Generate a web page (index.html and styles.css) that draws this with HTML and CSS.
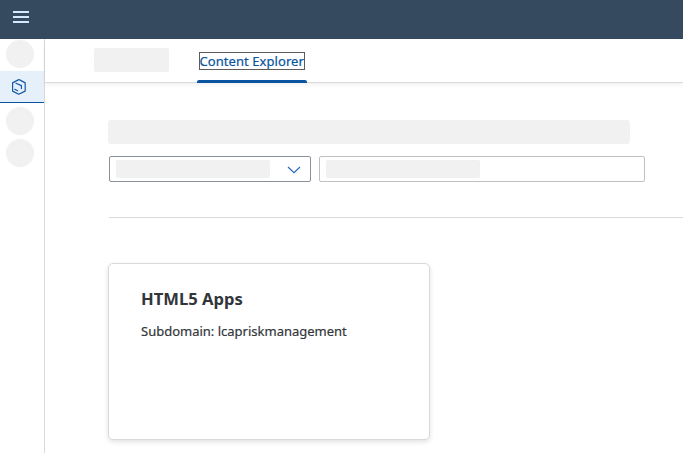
FILE: index.html
```html
<!DOCTYPE html>
<html lang="en">
<head>
<meta charset="utf-8">
<title>Content Explorer</title>
<link rel="stylesheet" href="styles.css">
</head>
<body>
<header class="shell">
  <svg width="16" height="12" viewBox="0 0 16 12"><path d="M0 1h16M0 6h16M0 11h16" fill="none" stroke="#d1e8ff" stroke-width="2"/></svg>
</header>
<div class="body">
  <nav class="side">
    <span class="dot"></span>
    <a class="side-item">
      <svg width="16" height="18" viewBox="0 0 16 18" fill="none" stroke="#1558a8" stroke-width="1.2" stroke-linejoin="round" stroke-linecap="round"><path d="M7.7 1.6 1.6 4.9v8.2l6.1 3.2 6.5-3.2V4.9L8.7 1.9M5 5.2l5.4 2.4v3M3.8 11.3l2.8 1.5"/></svg>
    </a>
    <span class="dot"></span>
    <span class="dot"></span>
  </nav>
  <main class="main">
    <div class="tabs">
      <span class="blank blank-tab"></span>
      <a class="tab"><span class="tab-label">Content Explorer</span></a>
    </div>
    <section class="content">
      <div class="blank blank-title"></div>
      <div class="filters">
        <div class="select">
          <span class="blank blank-field"></span>
          <svg class="chevron" width="14" height="8" viewBox="0 0 14 8"><path d="M1 1l6 5.7L13 1" fill="none" stroke="#2a69b3" stroke-width="1.2"/></svg>
        </div>
        <div class="input"><span class="blank blank-field"></span></div>
      </div>
      <hr class="rule">
      <article class="card">
        <h2>HTML5 Apps</h2>
        <p>Subdomain: lcapriskmanagement</p>
      </article>
    </section>
  </main>
</div>
</body>
</html>
```
FILE: styles.css
```css
* { box-sizing: border-box; }
body {
  margin: 0;
  height: 453px;
  overflow: hidden;
  display: flex;
  flex-direction: column;
  background: #fff;
  color: #32363a;
  font-family: "Noto Sans", sans-serif;
}
svg { display: block; }
.shell {
  flex: 0 0 39px;
  background: #354a5f;
  padding: 11px 13px;
}
.body { flex: 1; display: flex; min-height: 0; }
.side {
  flex: 0 0 45px;
  border-right: 1px solid #d9d9d9;
  padding-top: 1px;
}
.dot {
  display: block;
  width: 28px;
  height: 28px;
  margin: 0 0 4px 6px;
  border-radius: 50%;
  background: #f1f1f1;
}
.side-item {
  display: block;
  height: 32px;
  margin: 3px 0 4px;
  padding: 7px 0 0 11px;
  background: #e5f0fa;
  border-bottom: 1px solid #0854a0;
}
.dot:first-child { margin-bottom: 3px; }
.main { flex: 1; min-width: 0; }
.blank { display: block; background: #f1f1f1; border-radius: 2px; }
.tabs {
  display: flex;
  height: 44px;
  padding-left: 49px;
  border-bottom: 1px solid #d9d9d9;
  box-shadow: 0 2px 4px rgba(0, 0, 0, .06);
}
.blank-tab { width: 75px; height: 24px; margin-top: 9px; }
.tab {
  width: 110px;
  height: 44px;
  margin-left: 28px;
  padding: 13px 2px 0;
}
.tab::after {
  content: "";
  display: block;
  height: 3px;
  margin: 10px -2px 0;
  border-radius: 2px 2px 0 0;
  background: #0854a0;
}
.tab-label {
  display: block;
  width: 106px;
  height: 18px;
  border: 1px solid #5c5c5c;
  color: #0854a0;
  font-size: 13px;
  line-height: 16px;
  letter-spacing: .07px;
  text-indent: -.6px;
  -webkit-text-stroke: .2px;
  white-space: nowrap;
}
.content { padding: 37px 0 0 63px; }
.blank-title { width: 522px; height: 24px; border-radius: 3px; }
.filters { display: flex; gap: 8px; margin: 12px 0 0 1px; }
.select, .input {
  display: flex;
  align-items: center;
  height: 26px;
  padding-left: 6px;
  border: 1px solid #89919a;
  border-radius: 2px;
}
.select { width: 202px; gap: 17px; }
.chevron { margin-top: 2px; }
.input { width: 326px; border-color: #bfbfc4; }
.blank-field { width: 154px; height: 18px; }
.rule { height: 1px; margin: 35px 0 0 1px; border: 0; background: #d9d9d9; }
.card {
  width: 322px;
  height: 177px;
  margin-top: 45px;
  padding: 23px 32px;
  border: 1px solid #d9d9d9;
  border-radius: 5px;
  box-shadow: 0 2px 5px rgba(0, 0, 0, .12);
}
.card h2, .card p { margin: 0; white-space: nowrap; }
.card h2 { font-size: 16.6px; line-height: 24px; font-weight: 700; }
.card p { margin-top: 10px; font-size: 13px; line-height: 20px; -webkit-text-stroke: .2px; }
```
